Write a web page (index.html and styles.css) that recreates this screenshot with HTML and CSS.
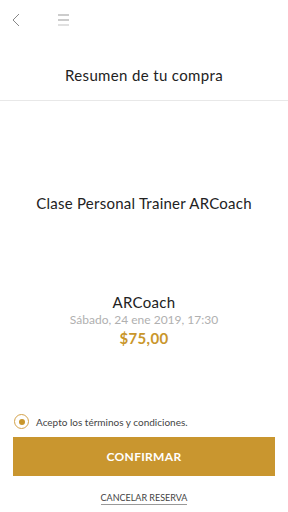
FILE: index.html
```html
<!DOCTYPE html>
<html lang="es">
<head>
    <meta charset="UTF-8">
    <meta name="viewport" content="width=device-width, initial-scale=1.0">
    <title>Resumen de tu compra</title>
    <link rel="stylesheet" href="styles.css">
</head>
<body>

    <div class="screen">
        <div class="topbar">
            <button class="icon-btn back" aria-label="Volver">
                <svg width="8" height="14" viewBox="0 0 8 14">
                    <path d="M7 1 L1 7 L7 13" fill="none" stroke="#888" stroke-width="1"/>
                </svg>
            </button>
            <button class="icon-btn menu" aria-label="Menu">
                <svg width="11" height="12" viewBox="0 0 11 12">
                    <line x1="0" y1="1" x2="11" y2="1" stroke="#999" stroke-width="1"/>
                    <line x1="0" y1="6" x2="11" y2="6" stroke="#999" stroke-width="1"/>
                    <line x1="0" y1="11" x2="11" y2="11" stroke="#ccc" stroke-width="1.2"/>
                </svg>
            </button>
        </div>

        <h1 class="page-title">Resumen de tu compra</h1>

        <div class="summary">
            <p class="product">Clase Personal Trainer ARCoach</p>

            <div class="details">
                <p class="coach">ARCoach</p>
                <p class="date">Sábado, 24 ene 2019, 17:30</p>
                <p class="price">$75,00</p>
            </div>
        </div>

        <div class="actions">
            <label class="terms">
                <span class="radio"><span class="dot"></span></span>
                Acepto los términos y condiciones.
            </label>
            <button class="confirm-btn">CONFIRMAR</button>
            <a href="#" class="cancel-link">CANCELAR RESERVA</a>
        </div>
    </div>

</body>
</html>
```

FILE: styles.css
```css
body {
    margin: 0;
    font-family: 'Lato', 'Open Sans', sans-serif;
    background: #ffffff;
    color: #222;
}
.screen {
    width: 288px;
    height: 512px;
    display: flex;
    flex-direction: column;
}
.topbar {
    display: flex;
    align-items: center;
    gap: 38px;
    height: 40px;
    padding: 0 0 0 12px;
}
.icon-btn {
    background: none;
    border: none;
    padding: 0;
    display: flex;
    cursor: pointer;
}
.page-title {
    margin: 0;
    height: 60px;
    line-height: 70px;
    font-size: 15px;
    font-weight: 400;
    letter-spacing: 0.35px;
    text-align: center;
    color: #222;
    border-bottom: 1px solid #e8e8e8;
}
.summary {
    flex: 1;
    display: flex;
    flex-direction: column;
    align-items: center;
    text-align: center;
}
.product {
    margin: 92px 0 0;
    font-size: 15px;
    line-height: 20px;
    letter-spacing: 0.25px;
    color: #222;
}
.details {
    margin-top: 80px;
}
.details p {
    margin: 0;
}
.coach {
    font-size: 15px;
    line-height: 18px;
    letter-spacing: 0.3px;
    color: #222;
}
.date {
    font-size: 12px;
    line-height: 18px;
    color: #b0b0b0;
}
.price {
    font-size: 15px;
    line-height: 19px;
    font-weight: 700;
    letter-spacing: 0.3px;
    color: #c9962b;
}
.actions {
    padding: 0 13px 7px;
    display: flex;
    flex-direction: column;
    align-items: center;
}
.terms {
    align-self: flex-start;
    display: flex;
    align-items: center;
    gap: 7px;
    font-size: 10px;
    color: #444;
    margin-bottom: 8px;
    margin-left: 1px;
}
.radio {
    width: 13px;
    height: 13px;
    border: 1px solid #d4a24a;
    border-radius: 50%;
    display: flex;
    align-items: center;
    justify-content: center;
}
.dot {
    width: 6px;
    height: 6px;
    border-radius: 50%;
    background: #c9962b;
}
.confirm-btn {
    width: 100%;
    height: 39px;
    border: none;
    background-color: #c9962f;
    color: #fff;
    font-family: inherit;
    font-size: 12px;
    font-weight: 700;
    letter-spacing: 0.3px;
    cursor: pointer;
}
.cancel-link {
    margin-top: 16px;
    font-size: 9px;
    color: #444;
    text-decoration: none;
    border-bottom: 1px solid #999;
    padding-bottom: 1px;
}
```
